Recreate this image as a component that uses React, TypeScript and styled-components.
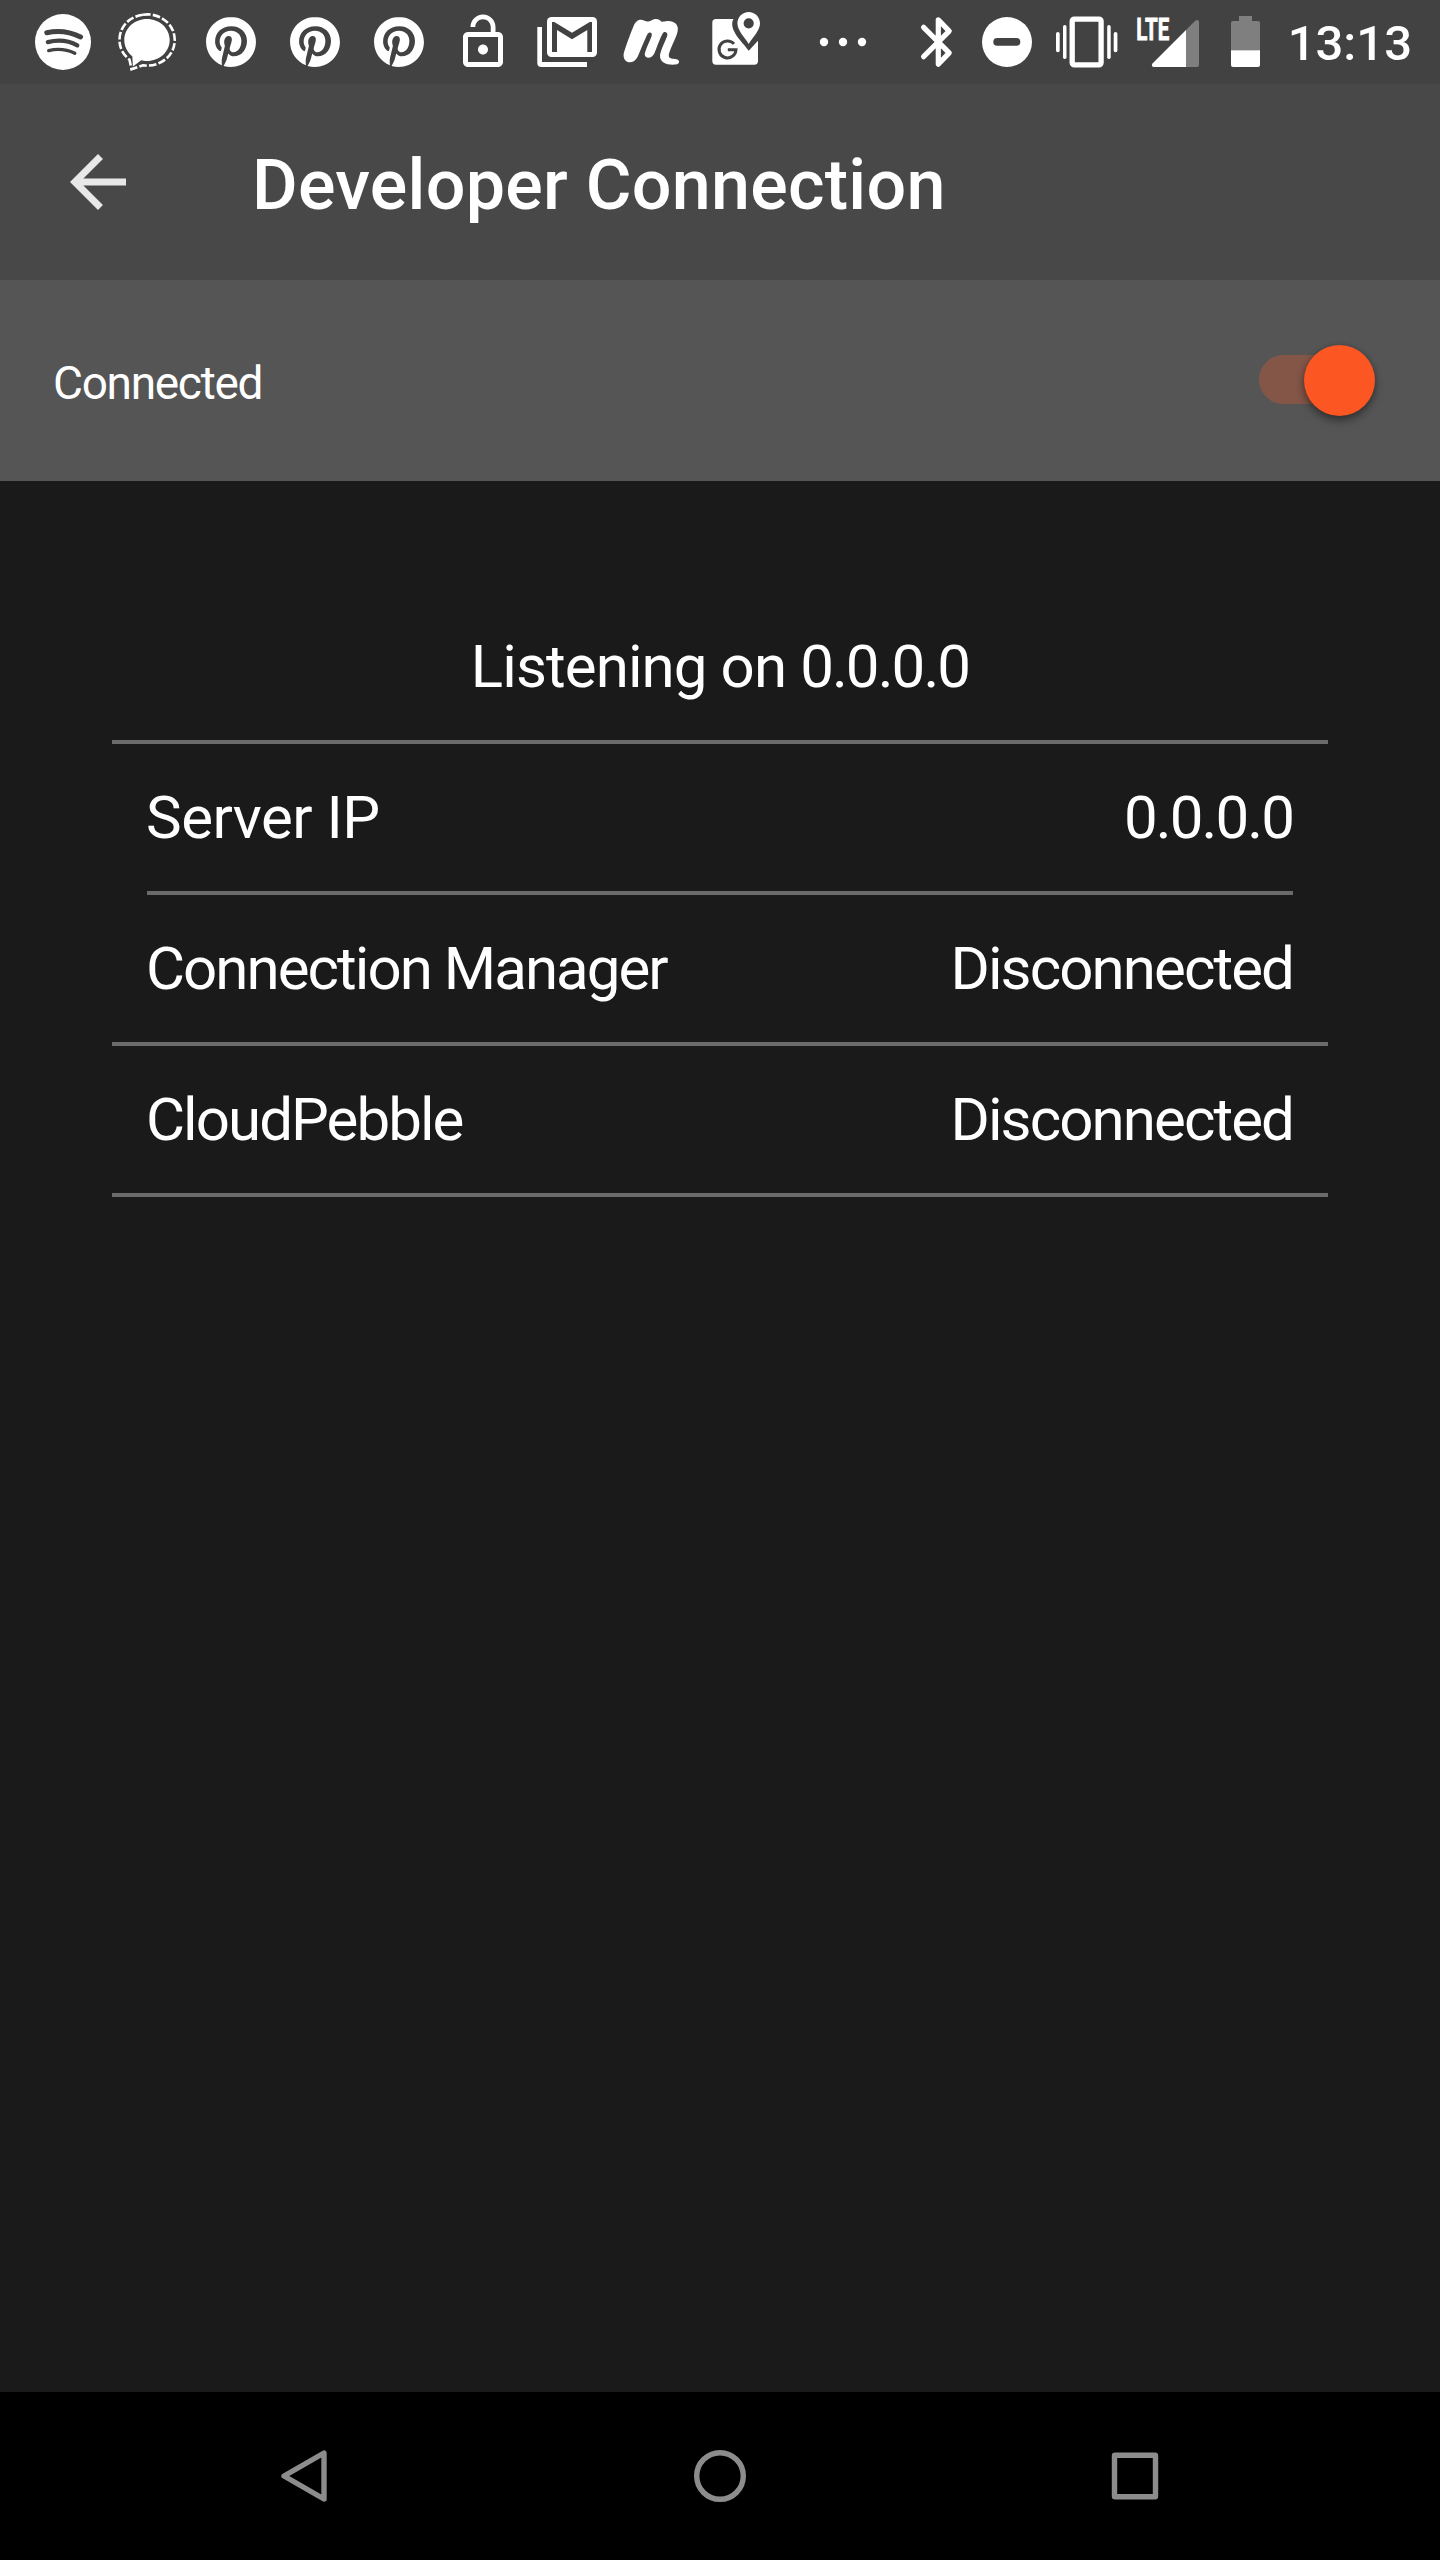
import React from "react";
import styled, { createGlobalStyle } from "styled-components";
import { SiPinterest } from "react-icons/si";

const GlobalStyle = createGlobalStyle`
  * { box-sizing: border-box; }
  body { margin: 0; background: #1a1a1a; }
`;

const Screen = styled.div`
  width: 1440px;
  height: 2560px;
  display: flex;
  flex-direction: column;
  background: #1a1a1a;
  color: #fff;
  font-family: Roboto, "Liberation Sans", sans-serif;
`;

const StatusBar = styled.div`
  height: 84px;
  flex: none;
  display: flex;
  align-items: center;
  padding: 0 28px 0 33px;
  background: #424242;
`;

const Notifications = styled.div`
  display: flex;
  align-items: center;
  gap: 24px;
`;

const System = styled.div`
  flex: 1;
  display: flex;
  align-items: center;
  margin-left: 35px;
`;

const IconBox = styled.span`
  width: 60px;
  height: 60px;
  display: flex;
  align-items: center;
  justify-content: center;
`;

const Glyph = styled.svg<{ $w?: number; $ml?: number }>`
  display: block;
  flex: none;
  width: ${(p) => p.$w ?? 60}px;
  height: 60px;
  margin-left: ${(p) => p.$ml ?? 0}px;
  overflow: visible;
`;

const Clock = styled.span`
  margin-left: auto;
  padding-top: 4px;
  font-size: 49px;
  line-height: 58px;
  font-weight: 500;
`;

const Toolbar = styled.header`
  height: 196px;
  flex: none;
  display: flex;
  align-items: center;
  padding: 0 56px;
  background: #484848;
`;

const BackArrow = styled.svg`
  width: 84px;
  height: 84px;
  flex: none;
`;

const Title = styled.h1`
  margin: 0 0 0 112px;
  padding-top: 5px;
  font-size: 70px;
  line-height: 82px;
  font-weight: 500;
  letter-spacing: 0.27px;
  white-space: nowrap;
`;

const ToggleRow = styled.div`
  height: 201px;
  flex: none;
  display: flex;
  align-items: center;
  justify-content: space-between;
  padding: 0 65px 0 53px;
  background: #555;
`;

const ToggleLabel = styled.span`
  padding-top: 4px;
  font-size: 46px;
  line-height: 54px;
  letter-spacing: -1.3px;
`;

const Track = styled.span`
  width: 116px;
  height: 49px;
  display: flex;
  align-items: center;
  justify-content: flex-end;
  margin-bottom: 2px;
  border-radius: 25px;
  background: linear-gradient(#835648, #835648) no-repeat 0 0 / 80px 100%;
`;

const Thumb = styled.span`
  width: 71px;
  height: 71px;
  flex: none;
  margin-top: 2px;
  border-radius: 50%;
  background: #fc5622;
  box-shadow: 0 5px 9px rgba(0, 0, 0, 0.38), 0 0 5px rgba(0, 0, 0, 0.16);
`;

const Content = styled.main`
  flex: 1;
  padding: 112px 112px 0;
`;

const Row = styled.div<{ $center?: boolean; $inset?: boolean }>`
  height: 151px;
  display: flex;
  align-items: center;
  justify-content: ${(p) => (p.$center ? "center" : "space-between")};
  margin: 0 ${(p) => (p.$inset ? 35 : 0)}px;
  padding: 0 ${(p) => (p.$inset || p.$center ? 0 : 35)}px;
  border-bottom: 4px solid #6b6b6b;
  font-size: 60px;
  line-height: 70px;
  white-space: pre;
`;

const Text = styled.span<{ $track: number; $shift?: number }>`
  margin-left: ${(p) => p.$shift ?? 0}px;
  letter-spacing: ${(p) => p.$track}px;
`;

const NavBar = styled.nav`
  height: 168px;
  flex: none;
  display: flex;
  align-items: center;
  justify-content: center;
  background: #000;
`;

const NavButton = styled.span`
  width: 415px;
  display: flex;
  justify-content: center;
`;

const NavIcon = styled.svg`
  width: 60px;
  height: 60px;
  fill: none;
  stroke: #8c8c8c;
  stroke-width: 5.4;
  stroke-linejoin: round;
`;

const BG = "#424242";

const Spotify = () => (
  <Glyph viewBox="33 12 60 60" fill="none" stroke={BG} strokeLinecap="round">
    <circle cx="63" cy="42" r="28" fill="#fff" stroke="none" />
    <path d="M46.8 32.7Q64.5 29 80.6 37" strokeWidth="5" />
    <path d="M47.8 42.1Q64 38 77.3 45.4" strokeWidth="4.2" />
    <path d="M48.7 50.6Q62.5 47.2 74.8 53.3" strokeWidth="3.4" />
  </Glyph>
);

const Signal = () => (
  <Glyph viewBox="117 12 60 60" fill="none">
    <path
      fill="#fff"
      d="M147 19c12.6 0 22.7 9.3 22.7 21s-10.1 21-22.7 21c-2.3 0-4-.3-5.8-.8l-8.3 6.3-.6-10.3c-5-3.9-8-9.7-8-16.2 0-11.7 10.1-21 22.7-21z"
    />
    <path
      stroke="#fff"
      strokeWidth="2.6"
      strokeDasharray="7.6 2.2"
      d="M143 14.7c16-2.3 31.700 8.500 31.700 25.300 0 17-16 27.500-31.700 25.300l-11.500 3.900-2-9.500c-6-5-10-11-10-19.700 0-13.500 10-23.500 23.500-25.300z"
    />
  </Glyph>
);

const Pinterest = () => (
  <IconBox>
    <SiPinterest size={50} />
  </IconBox>
);

const LockOpen = () => (
  <Glyph viewBox="0 0 24 24" fill="#fff">
    <path d="M12 17c1.100 0 2-.9 2-2s-.9-2-2-2-2 .9-2 2 .9 2 2 2zm6-9h-1V6c0-2.760-2.240-5-5-5S7 3.240 7 6h1.900c0-1.710 1.390-3.100 3.100-3.100 1.710 0 3.100 1.390 3.100 3.100v2H6c-1.100 0-2 .9-2 2v10c0 1.100.9 2 2 2h12c1.100 0 2-.9 2-2V10c0-1.100-.9-2-2-2zm0 12H6V10h12v10z" />
  </Glyph>
);

const Mail = () => (
  <Glyph viewBox="0 0 60 60">
    <path d="M0.300 15H5V50H50V55H4.500Q0.300 55 0.300 51Z" fill="#fff" />
    <rect x="10" y="5" width="50" height="40" rx="4.500" fill="#fff" />
    <path d="M15 10H17.300L35 20.800 52.700 10H55V40H50.300V18L35 27.300 20 18V40H15Z" fill={BG} />
  </Glyph>
);

const Meetup = () => (
  <Glyph viewBox="0 0 60 60">
    <path
      fill="#fff"
      d="M2.600 42.500C3.200 39 9 22.500 12 15.500C14.300 9 18 6.500 23 8.400C26 9.600 27.500 10 29.800 8.800C33.500 6.300 37.500 6.500 40 9.200C41.500 10.300 43 9.300 46 9C53 8.500 58.500 12.500 56.500 20C55 26 49.500 36 47.800 42.500C47.500 46 49.500 46.700 54 47C59.500 47.500 59.300 52 54.500 52.600C46.500 53.500 38.500 50.500 39 43.500C39.500 38 44.800 28.500 46.300 23.500C47 20.500 43.500 18.500 41.700 21.500C38.800 26.500 35.500 36.500 33.300 41.500C31 46.500 24.500 47.500 23.700 42.500C24 39 28.500 29.500 30.500 24.500C32 20.500 28.300 19 26.300 22.500C23.500 28 19.500 38.500 16.800 44.500C12.500 53.500 2 51.500 2.600 42.500Z"
    />
  </Glyph>
);

const MapPin = () => (
  <Glyph viewBox="0 0 60 60">
    <path
      fill="#fff"
      d="M11 7H28.500C26.500 10 27 15 29 19C32 26 38 31 43.700 38.700L53 28.800V49Q53 52.700 49.300 52.700H11Q7.300 52.700 7.300 49V10.700Q7.300 7 11 7Z"
    />
    <path
      fill="#fff"
      fillRule="evenodd"
      d="M43.700 0C50 0 55 5 55 11.300C55 18.500 48 25 43.700 32C39.400 25 32.400 18.500 32.400 11.300C32.400 5 37.400 0 43.700 0ZM43.700 6.200A5.100 5.100 0 1 0 43.700 16.400A5.100 5.100 0 1 0 43.700 6.200Z"
    />
    <path
      d="M29 31.900A8.500 8.500 0 1 0 31 37.700H22.800"
      fill="none"
      stroke={BG}
      strokeWidth="3"
    />
  </Glyph>
);

const More = () => (
  <Glyph viewBox="813 12 60 60" $ml={24} fill="#fff">
    <circle cx="824" cy="42" r="4.200" />
    <circle cx="843" cy="42" r="4.200" />
    <circle cx="862" cy="42" r="4.200" />
  </Glyph>
);

const Bluetooth = () => (
  <Glyph
    viewBox="908 12 60 60"
    fill="none"
    stroke="#fff"
    strokeWidth="5.200"
    strokeLinecap="round"
    strokeLinejoin="round"
  >
    <path d="M923.600 27.300L949.200 52.900L938.300 64.200V19.800L949.200 31.100L923.600 56.700" />
  </Glyph>
);

const DoNotDisturb = () => (
  <Glyph viewBox="977 12 60 60" $ml={9}>
    <circle cx="1007" cy="42" r="25" fill="#fff" />
    <rect x="993.300" y="38.100" width="27" height="7.600" rx="3.800" fill={BG} />
  </Glyph>
);

const Vibrate = () => (
  <Glyph viewBox="1056 12 62 60" $w={62} $ml={19} fill="#fff">
    <rect x="1056" y="32" width="3.700" height="20.300" rx="1.800" />
    <rect x="1063" y="25" width="3.500" height="34" rx="1.700" />
    <rect x="1072.200" y="19.100" width="28.900" height="45.800" rx="2.200" fill="none" stroke="#fff" strokeWidth="5.300" />
    <rect x="1107.200" y="25" width="3.500" height="34" rx="1.700" />
    <rect x="1113.700" y="32" width="3.700" height="20.300" rx="1.800" />
  </Glyph>
);

const Cellular = () => (
  <Glyph viewBox="1136 12 64 60" $w={64} $ml={18}>
    <path d="M1186 30L1195 21Q1199 18.500 1199 22.500V65Q1199 67 1197 67H1186Z" fill="#7f7f7f" />
    <path d="M1186 30V67H1153.500Q1150.800 66 1152.500 63.500Z" fill="#fff" />
    <text
      x="1136.300"
      y="39.700"
      textLength="33"
      lengthAdjust="spacingAndGlyphs"
      fontSize="30.500"
      fontWeight="700"
      fill="#fff"
      stroke="#fff"
      strokeWidth="0.800"
    >
      LTE
    </text>
  </Glyph>
);

const Battery = () => (
  <Glyph viewBox="1231 12 29 60" $w={29} $ml={31}>
    <path d="M1239 16H1252V21H1258Q1260 21 1260 23V50.300H1231V23Q1231 21 1233 21H1239Z" fill="#7f7f7f" />
    <path d="M1231 50.300H1260V65Q1260 67 1258 67H1233Q1231 67 1231 65Z" fill="#fff" />
  </Glyph>
);

export default function App() {
  return (
    <Screen>
      <GlobalStyle />
      <StatusBar>
        <Notifications>
          <Spotify />
          <Signal />
          <Pinterest />
          <Pinterest />
          <Pinterest />
          <LockOpen />
          <Mail />
          <Meetup />
          <MapPin />
          <More />
        </Notifications>
        <System>
          <Bluetooth />
          <DoNotDisturb />
          <Vibrate />
          <Cellular />
          <Battery />
          <Clock>13:13</Clock>
        </System>
      </StatusBar>
      <Toolbar>
        <BackArrow viewBox="0 0 24 24" fill="#e8e8e8">
          <path d="M20 11H7.830l5.590-5.590L12 4l-8 8 8 8 1.410-1.410L7.830 13H20v-2z" />
        </BackArrow>
        <Title>Developer Connection</Title>
      </Toolbar>
      <ToggleRow>
        <ToggleLabel>Connected</ToggleLabel>
        <Track>
          <Thumb />
        </Track>
      </ToggleRow>
      <Content>
        <Row $center>
          <Text $track={-0.9}>Listening on </Text>
          <Text $track={-1.9}>0.0.0.0</Text>
        </Row>
        <Row $inset>
          <Text $track={-0.5} $shift={-1}>Server IP</Text>
          <Text $track={-1.9}>0.0.0.0</Text>
        </Row>
        <Row>
          <Text $track={-1.95} $shift={-1}>Connection Manager</Text>
          <Text $track={-1.9}>Disconnected</Text>
        </Row>
        <Row>
          <Text $track={-1.95} $shift={-1}>CloudPebble</Text>
          <Text $track={-1.9}>Disconnected</Text>
        </Row>
      </Content>
      <NavBar>
        <NavButton>
          <NavIcon viewBox="0 0 60 60">
            <path d="M49 7V53L9 30Z" />
          </NavIcon>
        </NavButton>
        <NavButton>
          <NavIcon viewBox="0 0 60 60">
            <circle cx="30" cy="30" r="23.300" />
          </NavIcon>
        </NavButton>
        <NavButton>
          <NavIcon viewBox="0 0 60 60">
            <rect x="9.500" y="9.200" width="41" height="41.500" rx="0.500" />
          </NavIcon>
        </NavButton>
      </NavBar>
    </Screen>
  );
}
